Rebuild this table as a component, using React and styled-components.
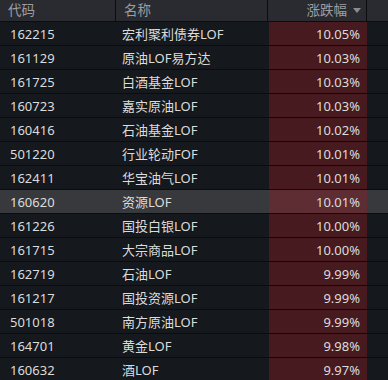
import React from "react";
import styled, { createGlobalStyle, css } from "styled-components";

const rows = [
  ["162215", "宏利聚利债券LOF", "10.05%"],
  ["161129", "原油LOF易方达", "10.03%"],
  ["161725", "白酒基金LOF", "10.03%"],
  ["160723", "嘉实原油LOF", "10.03%"],
  ["160416", "石油基金LOF", "10.02%"],
  ["501220", "行业轮动FOF", "10.01%"],
  ["162411", "华宝油气LOF", "10.01%"],
  ["160620", "资源LOF", "10.01%"],
  ["161226", "国投白银LOF", "10.00%"],
  ["161715", "大宗商品LOF", "10.00%"],
  ["162719", "石油LOF", "9.99%"],
  ["161217", "国投资源LOF", "9.99%"],
  ["501018", "南方原油LOF", "9.99%"],
  ["164701", "黄金LOF", "9.98%"],
  ["160632", "酒LOF", "9.97%"],
];

const App = () => {
  return (
    <>
      <Global />
      <Table>
        <Head>
          <HeadCell>代码</HeadCell>
          <HeadCell>名称</HeadCell>
          <HeadCell $right>
            涨跌幅
            <Arrow />
          </HeadCell>
          <HeadCell $last />
        </Head>
        {rows.map((r, i) => (
          <Row key={r[0]} $active={i === 7}>
            <Code>{r[0]}</Code>
            <Name>{r[1]}</Name>
            <Pct $active={i === 7}>{r[2]}</Pct>
            <span />
          </Row>
        ))}
      </Table>
    </>
  );
};

export default App;

const Fondo = "#15181c";
const Cabecera = "#2a2b30";
const Linea = "#0b0c0e";
const Rojo = "#471a1f";

const Global = createGlobalStyle`
  body {
    margin: 0;
    background: ${Fondo};
    font-family: "Noto Sans", "Noto Sans CJK SC", sans-serif;
  }
`;

const Table = styled.div`
  width: 388px;
  height: 380px;
  overflow: hidden;
  background: ${Fondo};
`;

const Cols = css`
  display: grid;
  grid-template-columns: 116px 152px 99px 1fr;
`;

const Head = styled.div`
  ${Cols};
  height: 21px;
  background: ${Cabecera};
`;

const HeadCell = styled.div`
  display: flex;
  align-items: center;
  justify-content: ${(p) => (p.$right ? "flex-end" : "flex-start")};
  padding: ${(p) => (p.$right ? "0 5px 0 0" : "0 0 0 8px")};
  border-right: ${(p) => (p.$last ? "none" : `1px solid ${Linea}`)};
  color: #9c9ea3;
  font-size: 13.5px;
  line-height: 1;
`;

const Arrow = styled.span`
  width: 0;
  height: 0;
  margin-left: 6px;
  border-left: 4px solid transparent;
  border-right: 4px solid transparent;
  border-top: 5px solid #8a8c91;
`;

const Row = styled.div`
  ${Cols};
  height: 23px;
  border-top: 1px solid ${Linea};
  background: ${(p) => (p.$active ? "#38393d" : Fondo)};
  color: #dcdcdc;
  font-size: 13px;
  align-items: stretch;
`;

const Code = styled.div`
  display: flex;
  align-items: center;
  padding-left: 10px;
`;

const Name = styled.div`
  display: flex;
  align-items: center;
  padding-left: 6px;
`;

const Pct = styled.div`
  display: flex;
  align-items: center;
  justify-content: flex-end;
  padding-right: 7px;
  margin-left: 1px;
  background: ${(p) => (p.$active ? "#5d2d33" : Rojo)};
`;
